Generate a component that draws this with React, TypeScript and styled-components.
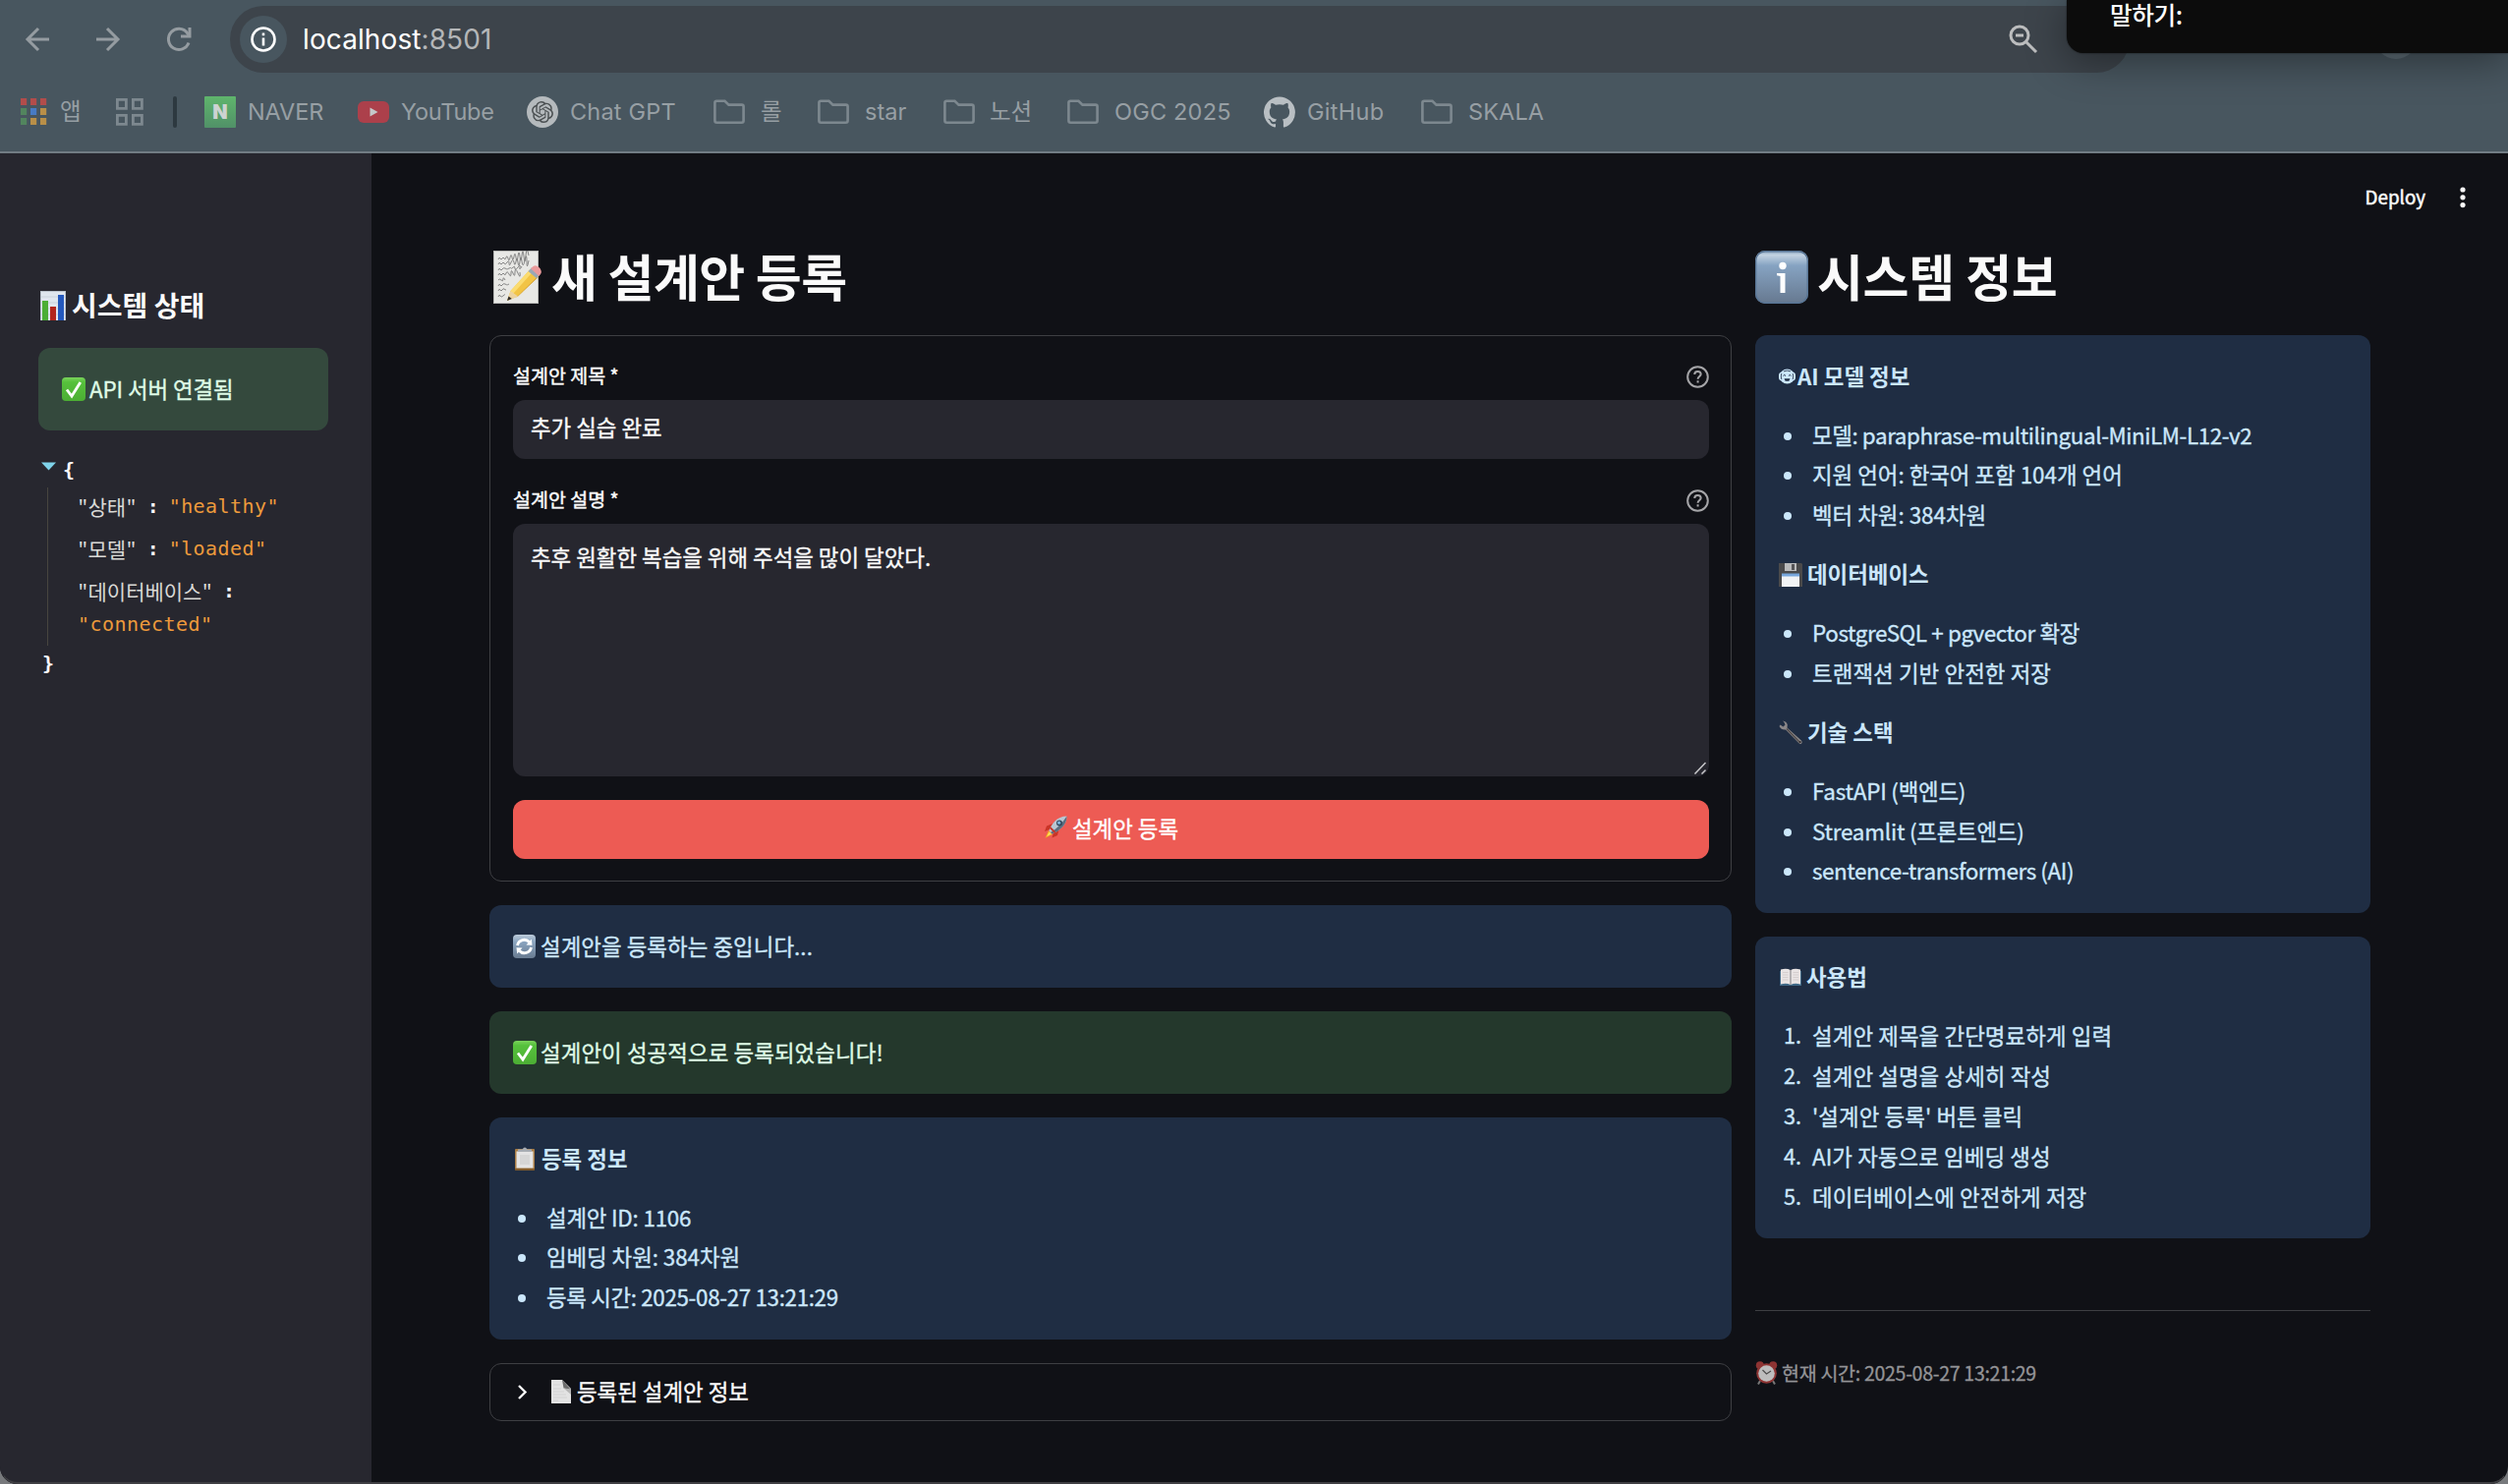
import React from 'react';
import styled, { createGlobalStyle, css } from 'styled-components';

const KR = '"Noto Sans CJK KR", "Noto Sans", sans-serif';
const UI = 'Inter, "Noto Sans CJK KR", sans-serif';
const MONO = '"DejaVu Sans Mono", monospace';
const MONO_KR = '"Noto Sans Mono CJK KR", "DejaVu Sans Mono", monospace';

const GlobalStyle = createGlobalStyle`
  *, *::before, *::after { box-sizing: border-box; }
  html, body { margin: 0; padding: 0; background: #77797c; }
  body { width: 2552px; height: 1510px; overflow: hidden; font-family: ${KR}; }
  svg { display: block; flex: none; }
  ul, ol, p, h1, h2, h3 { margin: 0; padding: 0; }
`;

/* Hangul sits low in its line box; this lifts the text and keeps icons centred. */
const lift = css`
  padding-bottom: 3px;
  > svg { margin-top: 3px; }
`;

const body = css`
  font: 400 22.4px/36px ${KR};
  -webkit-text-stroke: 0.35px currentColor;
`;

/* ---------- browser chrome ---------- */

const Window = styled.div`
  position: relative;
  width: 2552px;
  height: 1510px;
  display: flex;
  flex-direction: column;
  border-radius: 0 0 18px 18px;
  background: #101116;
  overflow: hidden;
`;

const Chrome = styled.header`
  height: 156px;
  flex: none;
  background: #48565f;
  border-bottom: 2px solid #717c84;
`;

const Toolbar = styled.div`
  display: flex;
  align-items: center;
  height: 80px;
  padding-left: 22px;
`;

const NavButton = styled.button`
  width: 32px;
  height: 32px;
  margin: 0 40px 0 0;
  padding: 0;
  border: 0;
  background: none;
  color: #959ca1;
`;

const AddressBar = styled.div`
  display: flex;
  align-items: center;
  width: 1933px;
  height: 68px;
  margin-left: -4px;
  padding: 0 93px 0 10px;
  border-radius: 34px;
  background: #3d444b;
`;

const SiteInfo = styled.span`
  display: flex;
  align-items: center;
  justify-content: center;
  width: 48px;
  height: 48px;
  margin-right: 16px;
  border-radius: 50%;
  background: #48565f;
`;

const Url = styled.span`
  flex: 1;
  color: #fff;
  font: 400 28px/40px ${UI};
  letter-spacing: 0.1px;
  em { font-style: normal; color: #b4b6b8; }
`;

const Bookmarks = styled.nav`
  display: flex;
  align-items: center;
  height: 68px;
  padding-left: 20px;
`;

const Bookmark = styled.a<{ $w: number; $gap?: number; $ls?: number }>`
  display: flex;
  align-items: center;
  flex: none;
  width: ${p => p.$w}px;
  gap: ${p => p.$gap ?? 12}px;
  color: #979fa4;
  font: 400 23.5px/32px ${UI};
  letter-spacing: ${p => p.$ls ?? 0}px;
  white-space: nowrap;
`;

const BookmarkDivider = styled.span`
  width: 4px;
  height: 32px;
  margin-right: 28px;
  border-radius: 2px;
  background: #2d3940;
`;

const SpeechPanel = styled.aside`
  position: absolute;
  top: 0;
  right: 0;
  width: 449px;
  height: 54px;
  padding-left: 44px;
  border-radius: 0 0 0 17px;
  background: #0c0c0c;
  box-shadow: 0 8px 40px rgba(0, 0, 0, 0.4), 0 0 2px rgba(0, 0, 0, 0.6);
  color: #fff;
  font: 500 24.6px/29px ${KR};
  letter-spacing: -0.4px;
`;

const Avatar = styled.span`
  position: absolute;
  top: 16px;
  left: 2416px;
  width: 44px;
  height: 44px;
  border-radius: 50%;
  background: #5c6b74;
`;

/* ---------- page ---------- */

const Body = styled.div`
  flex: 1;
  display: flex;
  min-height: 0;
`;

const Sidebar = styled.aside`
  width: 378px;
  flex: none;
  padding: 132px 44px 0 39px;
  background: #27272f;
`;

const Main = styled.main`
  flex: 1;
  display: flex;
  flex-direction: column;
`;

const AppHeader = styled.div`
  display: flex;
  justify-content: flex-end;
  align-items: center;
  height: 90px;
  padding-right: 43px;
  gap: 35px;
  color: #fafafa;
  font: 400 18.8px/32px ${KR};
  -webkit-text-stroke: 0.5px currentColor;
  ${lift}
`;

const Columns = styled.div`
  display: grid;
  grid-template-columns: 1264px 626px;
  column-gap: 24px;
  margin-left: 120px;
`;

const Column = styled.section`
  display: flex;
  flex-direction: column;
  gap: 24px;
`;

const Title = styled.h1<{ $gap: number; $indent?: number; $ls?: number }>`
  display: flex;
  align-items: center;
  gap: ${p => p.$gap}px;
  height: 71px;
  padding-left: ${p => p.$indent ?? 0}px;
  color: #fafafa;
  font: 700 51px/70px ${KR};
  letter-spacing: ${p => p.$ls ?? -0.3}px;
  white-space: nowrap;
  ${lift}
`;

const SideTitle = styled.h3`
  display: flex;
  align-items: center;
  gap: 4px;
  height: 46px;
  margin-bottom: 20px;
  color: #fafafa;
  font: 700 28px/46px ${KR};
  ${lift}
`;

const tones = {
  info: css`background: #1f2d43; color: #cbe7fb;`,
  success: css`background: #24382c; color: #dffbe6;`,
  side: css`background: #34493d; color: #dffbe6;`,
};

const Alert = styled.div<{ $tone: keyof typeof tones }>`
  padding: 24px;
  border-radius: 12px;
  ${body}
  ${p => tones[p.$tone]}
`;

const Line = styled.p<{ $gap?: number; $strong?: boolean; $ls?: number }>`
  display: flex;
  align-items: center;
  height: 36px;
  gap: ${p => p.$gap ?? 5}px;
  font-weight: ${p => (p.$strong ? 700 : 400)};
  -webkit-text-stroke-width: ${p => (p.$strong ? 0 : 0.35)}px;
  letter-spacing: ${p => p.$ls ?? 0}px;
  white-space: nowrap;
  ${lift}
`;

const List = styled.ul`
  display: flex;
  flex-direction: column;
  gap: 4.8px;
  margin: 24px 0;
  list-style: none;
  &:last-child { margin-bottom: 0; }
`;

const Item = styled.li<{ $ls?: number }>`
  display: flex;
  align-items: center;
  height: 36px;
  padding-bottom: 3px;
  letter-spacing: ${p => p.$ls ?? 0}px;
  white-space: nowrap;
`;

const Dot = styled.span`
  width: 8px;
  height: 8px;
  margin: 4px 21px 0 5px;
  border-radius: 50%;
  background: currentColor;
`;

const Num = styled.span`
  width: 34px;
  padding-left: 5px;
  font-size: 21.6px;
`;

const Form = styled.form`
  height: 556px;
  padding: 24px 22px 0 23px;
  border: 1px solid #3e3f43;
  border-radius: 12px;
`;

const Label = styled.label`
  display: flex;
  align-items: center;
  justify-content: space-between;
  height: 34px;
  margin-bottom: 7px;
  color: #fafafa;
  font: 400 19.5px/34px ${KR};
  -webkit-text-stroke: 0.45px currentColor;
  ${lift}
`;

const Field = styled.div<{ $h: number; $pt: number }>`
  position: relative;
  height: ${p => p.$h}px;
  padding: ${p => p.$pt}px 18px 0;
  margin-bottom: 25px;
  border-radius: 12px;
  background: #27272f;
  color: #fafafa;
  ${body}
`;

const Grip = styled.span`
  position: absolute;
  right: 1px;
  bottom: 1px;
`;

const Submit = styled.button`
  display: flex;
  align-items: center;
  justify-content: center;
  gap: 5px;
  width: 100%;
  height: 60px;
  margin-top: -1px;
  border: 0;
  padding: 0;
  border-radius: 12px;
  background: #ed5b54;
  color: #fff;
  ${body}
  padding-bottom: 4px;
`;

const Expander = styled.div`
  display: flex;
  align-items: center;
  height: 59px;
  padding-left: 24px;
  border: 1px solid #3e3f43;
  border-radius: 12px;
  color: #fafafa;
  gap: 6px;
  ${body}
  ${lift}
`;

const Rule = styled.hr`
  width: 100%;
  height: 1px;
  margin: 49px 0 23px;
  border: 0;
  background: #3e3f43;
`;

const Caption = styled.p`
  display: flex;
  align-items: center;
  gap: 4px;
  height: 32px;
  color: #949497;
  font: 400 19.5px/32px ${KR};
  -webkit-text-stroke: 0.3px currentColor;
  letter-spacing: -0.28px;
`;

const Json = styled.div`
  margin-top: 24px;
  color: #fafafa;
  font: 400 20px/34px ${MONO};
  letter-spacing: 0.45px;
  white-space: pre;
`;

const Brace = styled.div<{ $left: number; $h: number }>`
  display: flex;
  align-items: center;
  height: ${p => p.$h}px;
  gap: 7px;
  padding: 0 0 3px ${p => p.$left}px;
  font-weight: 700;
`;

const JsonBody = styled.div`
  height: 161px;
  margin-left: 9px;
  padding: 2px 0 0 30px;
  border-left: 1px solid #47453f;
`;

const JsonRow = styled.div<{ $mb?: number }>`
  display: flex;
  align-items: center;
  height: 34px;
  margin-bottom: ${p => p.$mb ?? 9}px;
`;

const Key = styled.span`
  color: #d9d9d6;
  font: 400 21px/34px ${MONO_KR};
  letter-spacing: 0;
`;
const Colon = styled.b`width: 33px; padding-left: 11px;`;
const Value = styled.span`color: #ed9a3c;`;

const BottomEdge = styled.div`
  position: absolute;
  left: 0;
  right: 0;
  bottom: 0;
  height: 40px;
  border: 1px solid transparent;
  border-bottom: 2px solid #3f3f43;
  border-radius: 0 0 18px 18px;
`;

/* ---------- icons ---------- */

const Stroke = ({ d, w = 32, sw = 3 }: { d: string; w?: number; sw?: number }) => (
  <svg width={w} height={w} viewBox={`0 0 ${w} ${w}`} fill="none" stroke="currentColor" strokeWidth={sw}>
    <path d={d} />
  </svg>
);

const Reload = () => (
  <svg width="32" height="32" viewBox="0 0 32 32" fill="none" stroke="currentColor" strokeWidth="3">
    <path d="M26 19.5A10.6 10.6 0 1 1 24.5 9.5L26.5 12" />
    <path d="M27 4V13H18" />
  </svg>
);

const InfoCircle = () => (
  <svg width="26" height="26" viewBox="0 0 26 26" fill="none" stroke="#fff" strokeWidth="2.6">
    <circle cx="13" cy="13" r="11.5" />
    <path d="M13 11.5V19.5M13 6.5V9.3" />
  </svg>
);

const ZoomOut = () => (
  <svg width="30" height="30" viewBox="0 0 30 30" fill="none" stroke="#bcbdbe" strokeWidth="3">
    <circle cx="11" cy="11" r="9" />
    <path d="M17.5 17.5L28 28M7 11H15" />
  </svg>
);

const Apps = () => {
  const colors = ['#b24d4b', '#b24d4b', '#b24d4b', '#52855e', '#477bc4', '#b98f48', '#52855e', '#b98f48', '#b98f48'];
  return (
    <svg width="28" height="28" viewBox="0 0 28 28">
      {colors.map((c, i) => (
        <rect key={i} x={1 + (i % 3) * 10} y={Math.floor(i / 3) * 10} width="6.2" height="7" fill={c} />
      ))}
    </svg>
  );
};

const TabGrid = () => (
  <svg width="30" height="30" viewBox="0 0 30 30" fill="none" stroke="#7d888f" strokeWidth="2.8">
    <path d="M2.4 2.4h9v9h-9zM18.4 2.4h9v9h-9zM2.4 18.4h9v9h-9zM18.4 18.4h9v9h-9z" />
  </svg>
);

const NaverBadge = styled.span`
  width: 32px;
  height: 32px;
  border-radius: 1px;
  background: linear-gradient(#5fb56c, #519168);
  color: #cdd3d1;
  font: 900 20px/32px ${UI};
  letter-spacing: 0;
  text-align: center;
`;

const YouTubeLogo = () => (
  <svg width="32" height="22" viewBox="0 0 32 22">
    <rect width="32" height="22" rx="6" fill="#ac404b" />
    <path d="M12.5 6.5L20.5 11L12.5 15.5Z" fill="#c5c8ca" />
  </svg>
);

const ChatGptLogo = () => (
  <svg width="32" height="32" viewBox="0 0 32 32">
    <circle cx="16" cy="16" r="16" fill="#b5babd" />
    <path
      transform="translate(5 5) scale(0.917)"
      fill="#4b5052"
      d="M22.28 9.82a5.98 5.98 0 0 0-.52-4.91 6.05 6.05 0 0 0-6.51-2.9A6.07 6.07 0 0 0 4.98 4.18a5.98 5.98 0 0 0-4 2.9 6.05 6.05 0 0 0 .74 7.1 5.98 5.98 0 0 0 .51 4.91 6.05 6.05 0 0 0 6.51 2.9A5.98 5.98 0 0 0 13.26 24a6.06 6.06 0 0 0 5.77-4.21 5.99 5.99 0 0 0 4-2.9 6.06 6.06 0 0 0-.75-7.07zm-9.02 12.61a4.48 4.48 0 0 1-2.88-1.04l.14-.08 4.78-2.76a.79.79 0 0 0 .39-.68v-6.74l2.02 1.17a.07.07 0 0 1 .04.05v5.58a4.5 4.5 0 0 1-4.49 4.5zm-9.66-4.13a4.47 4.47 0 0 1-.53-3.01l.14.09 4.78 2.76a.77.77 0 0 0 .78 0l5.84-3.37v2.33a.08.08 0 0 1-.03.06L9.74 19.95a4.5 4.5 0 0 1-6.14-1.65zM2.34 7.9a4.49 4.49 0 0 1 2.37-1.97v5.68a.77.77 0 0 0 .39.68l5.81 3.35-2.02 1.17a.08.08 0 0 1-.07 0l-4.83-2.79A4.5 4.5 0 0 1 2.34 7.87zm16.6 3.86l-5.84-3.39 2.02-1.16a.08.08 0 0 1 .07 0l4.83 2.79a4.49 4.49 0 0 1-.68 8.1v-5.68a.79.79 0 0 0-.4-.66zm2.01-3.02l-.14-.09-4.77-2.78a.78.78 0 0 0-.79 0L9.41 9.23V6.9a.07.07 0 0 1 .03-.06l4.83-2.79a4.5 4.5 0 0 1 6.68 4.66zM8.31 12.86l-2.02-1.16a.08.08 0 0 1-.04-.06V6.07a4.5 4.5 0 0 1 7.38-3.45l-.14.08-4.78 2.76a.79.79 0 0 0-.4.68zm1.1-2.37l2.6-1.5 2.6 1.5v3l-2.6 1.5-2.6-1.5z"
    />
  </svg>
);

const FolderIcon = () => (
  <svg width="32" height="26" viewBox="0 0 32 26" fill="none" stroke="#7d888f" strokeWidth="2.6">
    <path d="M1.4 3.6Q1.4 1.8 3.2 1.8H11.5L15.5 5.6H28.8Q30.6 5.6 30.6 7.4V21.8Q30.6 23.8 28.6 23.8H3.4Q1.4 23.8 1.4 21.8Z" />
  </svg>
);

const GitHubLogo = () => (
  <svg width="32" height="32" viewBox="0 0 24 24" fill="#b9bfc3">
    <path d="M12 .3a12 12 0 0 0-3.8 23.38c.6.12.83-.26.83-.57L9 21.07c-3.34.72-4.04-1.61-4.04-1.61-.55-1.39-1.34-1.76-1.34-1.76-1.08-.74.09-.73.09-.73 1.2.09 1.83 1.24 1.83 1.24 1.08 1.83 2.81 1.3 3.5 1 .1-.78.42-1.31.76-1.61-2.67-.3-5.47-1.33-5.47-5.93 0-1.31.47-2.38 1.24-3.22-.14-.3-.54-1.52.1-3.18 0 0 1-.32 3.3 1.23a11.5 11.5 0 0 1 6 0c2.28-1.55 3.29-1.23 3.29-1.23.64 1.66.24 2.88.12 3.18a4.65 4.65 0 0 1 1.23 3.22c0 4.61-2.8 5.63-5.48 5.92.42.36.81 1.1.81 2.22l-.01 3.29c0 .31.2.69.82.57A12 12 0 0 0 12 .3" />
  </svg>
);

const HelpIcon = () => (
  <svg width="23" height="23" viewBox="0 0 23 23" fill="none" stroke="#a5a5a8" strokeWidth="2">
    <circle cx="11.5" cy="11.5" r="10.3" />
    <path d="M8.3 9.1Q8.3 5.9 11.5 5.9T14.7 8.8C14.7 10.8 11.6 11.2 11.6 13.8M11.6 15.3V17.4" />
  </svg>
);

const MenuDots = () => (
  <svg width="6" height="22" viewBox="0 0 6 22" fill="#fafafa">
    <circle cx="3" cy="3" r="2.6" /><circle cx="3" cy="10.8" r="2.6" /><circle cx="3" cy="18.6" r="2.6" />
  </svg>
);

const Chart = () => (
  <svg width="30" height="30" viewBox="0 0 30 30">
    <rect x="2" y="0" width="26" height="30" fill="#b9c2cb" />
    <rect x="3" y="1" width="24" height="29" fill="#dfe6ee" />
    <path d="M3 6h24M3 12h24M3 18h24M3 24h24" stroke="#c9d2dc" strokeWidth="1" />
    <rect x="4" y="10" width="6" height="20" fill="#4cae35" />
    <rect x="12" y="16" width="6" height="14" fill="#b3261d" />
    <rect x="20" y="4" width="6" height="26" fill="#2459bd" />
  </svg>
);

const Check = () => (
  <svg width="24" height="24" viewBox="0 0 24 24">
    <defs>
      <linearGradient id="ck" x1="0" y1="0" x2="0" y2="1">
        <stop offset="0" stopColor="#7bd45c" /><stop offset=".2" stopColor="#56c13c" /><stop offset="1" stopColor="#4cae34" />
      </linearGradient>
    </defs>
    <rect width="24" height="24" rx="4" fill="url(#ck)" />
    <path d="M5 12.5L10 19L18.8 5" fill="none" stroke="#fff" strokeWidth="2.8" />
  </svg>
);

const Memo = () => (
  <svg width="50" height="54" viewBox="0 0 50 54">
    <rect x="0" y="0" width="46" height="54" fill="#b9b9b7" />
    <rect x="1" y="1" width="44" height="52" fill="#e8e8e5" />
    <path
      d="M5 9q1-3 2-1t2 0 2 0 2-1 2 1 2-1 2 0 2-1 2 1 2-1 2 0 2-1 2 1 2-1 3 0M5 14q1-3 2-1t2 0 2 0 3-1 2 1 2-1 3 0 2-1 2 1 2-1 2 0 3-1 2 1 2-1M5 20q1-3 2-1t2 0 3-1 2 1 2-1 2 0 2-1 2 1 3-1 2 0 2-1M5 25q1-3 2-1t2 0 2 0 2-1 3 1 2-1 2 0 2-1 3 1 2-1M5 30q1-2 3 0t2-1 2 1M5 36q1-3 2-1t2 0 3-1 2 1 2-1M5 41q1-3 2-1t2 0 2-1 2 1M5 47q1-3 2-1t3 0 2-1"
      fill="none" stroke="#7b7b7b" strokeWidth=".9"
    />
    <path d="M14 51L17.500 41L37 19.500L46 26.500L25 46.500Z" fill="#f2c445" />
    <path d="M17.500 41L37 19.500L40 21.800L20 44Z" fill="#fbdc70" />
    <path d="M23 48L43 28.500L46 26.500L25 46.500Z" fill="#c9912a" />
    <path d="M14 51L17.500 41L25 46.500Z" fill="#ecd3a1" />
    <path d="M14 51L15.500 46.500L18.800 48.900Z" fill="#2f2c2a" />
    <path d="M35.500 21L39 17.300L47.300 24.500L44 28.300Z" fill="#9aa8b5" />
    <path d="M38 18.300L40.500 16Q44 14 47.500 18Q50 22 47.800 24.300L46.300 26Z" fill="#ea9a9b" />
  </svg>
);

const InfoEmoji = () => (
  <svg width="54" height="54" viewBox="0 0 54 54">
    <defs>
      <linearGradient id="ie" x1="0" y1="0" x2="0" y2="1">
        <stop offset="0" stopColor="#7d9bb9" /><stop offset=".08" stopColor="#c3d3e2" />
        <stop offset=".28" stopColor="#86a3c2" /><stop offset="1" stopColor="#66788f" />
      </linearGradient>
    </defs>
    <rect width="54" height="54" rx="10" fill="url(#ie)" />
    <rect x=".7" y=".7" width="52.600" height="52.600" rx="9.500" fill="none" stroke="#587595" strokeWidth="1.400" />
    <circle cx="28" cy="15.500" r="3.700" fill="#fff" />
    <path d="M22 23H30.500V43H25.500V26L22 25.200Z" fill="#fff" />
  </svg>
);

const Rocket = () => (
  <svg width="24" height="24" viewBox="0 0 24 24">
    <path d="M9 8L3 10.500L1 16L7 13.500ZM15.500 14L14 20L8.500 22.500L10 16.500Z" fill="#c93427" />
    <path d="M5 15L1.500 22.800L9 19Z" fill="#f5a623" /><path d="M5.500 16.500L3 21.300L8 18.500Z" fill="#fde25a" />
    <path d="M23.500 .5Q16 .5 11 6Q6.500 11 5.500 15.500L8.500 18.500Q13.500 17 18 12.500Q23.500 7.500 23.500 .5Z" fill="#b9c6d2" />
    <path d="M23.500 .5Q23.500 7.500 18 12.500Q13.500 17 8.500 18.500L7 17Q16 12 23.500 .5Z" fill="#5b6e80" />
    <circle cx="16" cy="7.500" r="3" fill="#34495c" /><circle cx="15.600" cy="7.200" r="1.600" fill="#7fb4dc" />
    <path d="M6.500 12L11.500 17" stroke="#c93427" strokeWidth="1.800" />
  </svg>
);

const Refresh = () => (
  <svg width="23" height="24" viewBox="0 0 23 24">
    <defs>
      <linearGradient id="rf" x1="0" y1="0" x2="0" y2="1">
        <stop offset="0" stopColor="#bccbda" /><stop offset=".3" stopColor="#8ba5c0" /><stop offset="1" stopColor="#697b91" />
      </linearGradient>
    </defs>
    <rect width="23" height="24" rx="4" fill="url(#rf)" />
    <path d="M4.500 11A7 7 0 0 1 16.500 7.500M18.500 13A7 7 0 0 1 6.500 16.500" fill="none" stroke="#fff" strokeWidth="2.800" />
    <path d="M13.500 10.500L19.500 10.800L18.800 4.500ZM9.500 13.500L3.500 13.200L4.200 19.500Z" fill="#fff" />
  </svg>
);

const Clipboard = () => (
  <svg width="24" height="24" viewBox="0 0 24 24">
    <rect x="2" y="2" width="20" height="22" rx="1" fill="#a97d45" />
    <rect x="3.500" y="4.500" width="17" height="17" fill="#e4e4e4" />
    <rect x="7" y="8" width="10" height="10" fill="#d6d6d6" />
    <path d="M5 2.500H9.500Q12-1.500 14.500 2.500H19V5H5Z" fill="#a8adb3" />
    <path d="M2 23H22" stroke="#785326" strokeWidth="1.600" />
  </svg>
);

const Page = () => (
  <svg width="20" height="24" viewBox="0 0 20 24">
    <path d="M0 0H11L20 9V24H0Z" fill="#e3e3e3" />
    <path d="M11 0L20 10L12.500 8.500Z" fill="#6c6c6c" />
    <path d="M12.500 8.500L20 9.500V15Z" fill="#b5b5b5" />
    <path d="M2 5h7M2 9h8M2 12h11M2 15h13M2 18h14M2 21h5" stroke="#cfcfcf" strokeWidth=".8" />
  </svg>
);

const Robot = () => (
  <svg width="17" height="18" viewBox="0 0 17 18" fill="currentColor" stroke="none">
    <rect x="0" y="4.500" width="17" height="9" rx="3.500" />
    <circle cx="8.500" cy="9" r="7.600" />
    <path d="M2.800 6Q1.800 9 2.800 12M14.200 6Q15.200 9 14.200 12M5 3.800Q8.500 2.400 12 3.800" stroke="#1f2d43" fill="none" strokeWidth=".8" />
    <path d="M4.500 8.500Q5.700 6.300 7 8.500M10 8.500Q11.300 6.300 12.500 8.500" stroke="#1f2d43" fill="none" strokeWidth="1" />
    <path d="M5.500 11.300H11.500L10.300 13.800H6.700Z" fill="#1f2d43" />
  </svg>
);

const Floppy = () => (
  <svg width="24" height="24" viewBox="0 0 24 24">
    <path d="M0 0H23L24 1V24H0Z" fill="#4a4a4b" />
    <rect x="6" y="0" width="12" height="8" fill="#b9babb" /><rect x="13" y="1" width="3" height="6" fill="#545456" />
    <rect x="3" y="11" width="18" height="13" fill="#f1f3f5" /><rect x="3" y="10.500" width="18" height="3" fill="#78a7dc" />
  </svg>
);

const Wrench = () => (
  <svg width="24" height="24" viewBox="0 0 24 24">
    <path d="M4 .5Q8 1 8.800 4.500L8.500 7.500L23 20.500Q24.500 23 22.500 24Q21 24 20 22.800L7 9.500Q2.500 10 .5 6L1.500 4.500L4.500 6.500L6.500 4.500L5.500 2Z" fill="#8b8788" />
    <path d="M8 8.500L21.500 22.500" stroke="#4e4949" strokeWidth="1.300" />
    <circle cx="21.800" cy="22" r=".9" fill="#2c2829" />
  </svg>
);

const Book = () => (
  <svg width="24" height="24" viewBox="0 0 24 24">
    <path d="M1 5H23V20H1Z" fill="#3f6886" />
    <path d="M2 3.500Q8 2 11.800 4V19Q8 17 2 18.500ZM22 3.500Q16 2 12.200 4V19Q16 17 22 18.500Z" fill="#e9e4e4" />
    <path d="M12 4V19" stroke="#a9a2a2" strokeWidth="1.300" />
    <path d="M4 6.500h5.500M4 9h5.500M4 11.500h5.500M4 14h5.500M14.500 6.500H20M14.500 9H20M14.500 11.500H20M14.500 14H20" stroke="#cfc8c8" strokeWidth=".8" />
  </svg>
);

const Alarm = () => (
  <svg width="23" height="24" viewBox="0 0 23 24">
    <path d="M5 20L3 23.500M18 20L20 23.500" stroke="#777" strokeWidth="2" />
    <circle cx="4.800" cy="4.300" r="4" fill="#8e3433" /><circle cx="18.200" cy="4.300" r="4" fill="#8e3433" />
    <circle cx="11.500" cy="12.500" r="10.300" fill="#8e3433" />
    <circle cx="11.500" cy="12.500" r="8.300" fill="#bdbdbd" />
    <path d="M7.500 9L11.500 13L16 10" fill="none" stroke="#4c4c4c" strokeWidth="1.200" />
  </svg>
);

/* ---------- data ---------- */

type Entry = [text: string, spacing?: number];

const registered: Entry[] = [
  ['설계안 ID: 1106', -0.2],
  ['임베딩 차원: 384차원', -0.05],
  ['등록 시간: 2025-08-27 13:21:29', -0.34],
];

const stack: { icon: React.ReactNode; gap: number; title: string; items: Entry[] }[] = [
  {
    icon: <Robot />, gap: 2, title: 'AI 모델 정보',
    items: [
      ['모델: paraphrase-multilingual-MiniLM-L12-v2', -0.4],
      ['지원 언어: 한국어 포함 104개 언어'],
      ['벡터 차원: 384차원'],
    ],
  },
  { icon: <Floppy />, gap: 5, title: '데이터베이스', items: [['PostgreSQL + pgvector 확장', -0.38], ['트랜잭션 기반 안전한 저장', 0.1]] },
  {
    icon: <Wrench />, gap: 5, title: '기술 스택',
    items: [['FastAPI (백엔드)', -0.2], ['Streamlit (프론트엔드)', -0.2], ['sentence-transformers (AI)', -0.4]],
  },
];

const steps = [
  '설계안 제목을 간단명료하게 입력',
  '설계안 설명을 상세히 작성',
  "'설계안 등록' 버튼 클릭",
  'AI가 자동으로 임베딩 생성',
  '데이터베이스에 안전하게 저장',
];

const Bullets = ({ items }: { items: Entry[] }) => (
  <List>
    {items.map(([text, ls]) => (
      <Item key={text} $ls={ls}><Dot />{text}</Item>
    ))}
  </List>
);

export default function App() {
  return (
    <Window>
      <GlobalStyle />
      <Chrome>
        <Toolbar>
          <NavButton><Stroke d="M28 16H6M17 5L6 16L17 27" /></NavButton>
          <NavButton><Stroke d="M4 16H26M15 5L26 16L15 27" /></NavButton>
          <NavButton><Reload /></NavButton>
          <AddressBar>
            <SiteInfo><InfoCircle /></SiteInfo>
            <Url>localhost<em>:8501</em></Url>
            <ZoomOut />
          </AddressBar>
        </Toolbar>
        <Bookmarks>
          <Bookmark $w={97} $gap={13}><Apps />앱</Bookmark>
          <Bookmark $w={59}><TabGrid /></Bookmark>
          <BookmarkDivider />
          <Bookmark $w={156} $gap={12} $ls={-0.1}><NaverBadge>N</NaverBadge>NAVER</Bookmark>
          <Bookmark $w={172} $ls={-0.25}><YouTubeLogo />YouTube</Bookmark>
          <Bookmark $w={190} $ls={0.2}><ChatGptLogo />Chat GPT</Bookmark>
          <Bookmark $w={106} $gap={16}><FolderIcon />롤</Bookmark>
          <Bookmark $w={128} $gap={16}><FolderIcon />star</Bookmark>
          <Bookmark $w={126} $gap={15}><FolderIcon />노션</Bookmark>
          <Bookmark $w={200} $gap={16} $ls={0.2}><FolderIcon />OGC 2025</Bookmark>
          <Bookmark $w={160} $ls={0.3}><GitHubLogo />GitHub</Bookmark>
          <Bookmark $w={130} $gap={16} $ls={0.1}><FolderIcon />SKALA</Bookmark>
        </Bookmarks>
      </Chrome>

      <Body>
        <Sidebar>
          <SideTitle><Chart />시스템 상태</SideTitle>
          <Alert $tone="side"><Line $gap={4} $ls={-0.1}><Check />API 서버 연결됨</Line></Alert>
          <Json>
            <Brace $left={3} $h={34}>
              <svg width="15" height="24" viewBox="0 0 15 24"><path d="M0 4.500H15L7.500 12.500Z" fill="#7fd3ea" /></svg>
              {'{'}
            </Brace>
            <JsonBody>
              <JsonRow><Key>"상태"</Key><Colon>:</Colon><Value>"healthy"</Value></JsonRow>
              <JsonRow><Key>"모델"</Key><Colon>:</Colon><Value>"loaded"</Value></JsonRow>
              <JsonRow $mb={0}><Key>"데이터베이스"</Key><Colon>:</Colon></JsonRow>
              <JsonRow $mb={0}><Value>"connected"</Value></JsonRow>
            </JsonBody>
            <Brace $left={4} $h={38}>{'}'}</Brace>
          </Json>
        </Sidebar>

        <Main>
          <AppHeader>Deploy<MenuDots /></AppHeader>
          <Columns>
            <Column>
              <Title $gap={9} $indent={4} $ls={-0.5}><Memo />새 설계안 등록</Title>
              <Form>
                <Label>설계안 제목 *<HelpIcon /></Label>
                <Field $h={60} $pt={9}>추가 실습 완료</Field>
                <Label>설계안 설명 *<HelpIcon /></Label>
                <Field $h={257} $pt={15}>
                  추후 원활한 복습을 위해 주석을 많이 달았다.
                  <Grip>
                    <svg width="16" height="16" viewBox="0 0 16 16" stroke="#c9c9cc" strokeWidth="1.500">
                      <path d="M2.500 14.500L13.500 3M9.500 14.500L13.500 10.500" />
                    </svg>
                  </Grip>
                </Field>
                <Submit type="button"><Rocket />설계안 등록</Submit>
              </Form>
              <Alert $tone="info"><Line $ls={0.06}><Refresh />설계안을 등록하는 중입니다...</Line></Alert>
              <Alert $tone="success"><Line $gap={4} $ls={0.1}><Check />설계안이 성공적으로 등록되었습니다!</Line></Alert>
              <Alert $tone="info">
                <Line $strong><Clipboard />등록 정보</Line>
                <Bullets items={registered} />
              </Alert>
              <Expander>
                <svg width="32" height="24" viewBox="0 0 32 24" fill="none" stroke="#fafafa" strokeWidth="2.400">
                  <path d="M5 6L11.500 12.500L5 19" />
                </svg>
                <Page />등록된 설계안 정보
              </Expander>
            </Column>

            <Column>
              <Title $gap={9}><InfoEmoji />시스템 정보</Title>
              <Alert $tone="info">
                {stack.map(group => (
                  <React.Fragment key={group.title}>
                    <Line $strong $gap={group.gap}>{group.icon}{group.title}</Line>
                    <Bullets items={group.items} />
                  </React.Fragment>
                ))}
              </Alert>
              <Alert $tone="info">
                <Line $strong $gap={4}><Book />사용법</Line>
                <List as="ol">
                  {steps.map((step, i) => (
                    <Item key={step} $ls={0.1}><Num>{i + 1}.</Num>{step}</Item>
                  ))}
                </List>
              </Alert>
              <Rule />
              <Caption><Alarm />현재 시간: 2025-08-27 13:21:29</Caption>
            </Column>
          </Columns>
        </Main>
      </Body>
      <BottomEdge />
      <Avatar />
      <SpeechPanel>말하기:</SpeechPanel>
    </Window>
  );
}
